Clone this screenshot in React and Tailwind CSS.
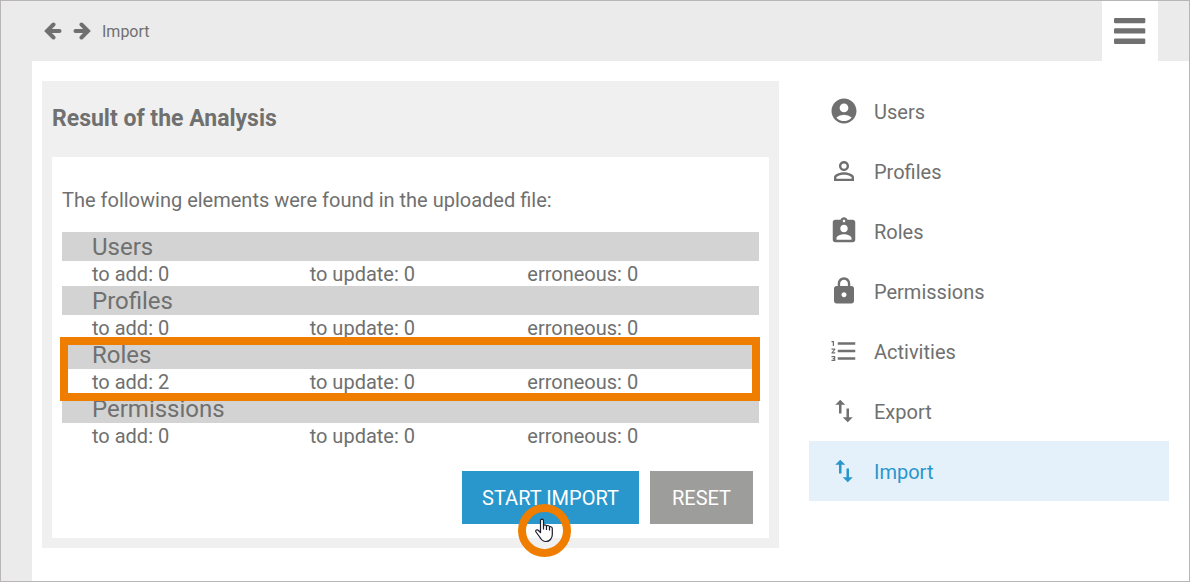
import {
  MdAccountCircle,
  MdPersonOutline,
  MdAssignmentInd,
  MdLock,
  MdFormatListNumbered,
  MdImportExport,
} from "react-icons/md";

const navItems = [
  { label: "Users", icon: MdAccountCircle },
  { label: "Profiles", icon: MdPersonOutline },
  { label: "Roles", icon: MdAssignmentInd },
  { label: "Permissions", icon: MdLock },
  { label: "Activities", icon: MdFormatListNumbered },
  { label: "Export", icon: MdImportExport },
  { label: "Import", icon: MdImportExport, active: true },
];

const results = [
  { name: "Users", add: 0, update: 0, erroneous: 0 },
  { name: "Profiles", add: 0, update: 0, erroneous: 0 },
  { name: "Roles", add: 2, update: 0, erroneous: 0, highlight: true },
  { name: "Permissions", add: 0, update: 0, erroneous: 0 },
];

function ArrowIcon({ className = "" }) {
  return (
    <svg viewBox="0 0 18 18" className={`w-[18px] h-[18px] ${className}`} fill="none" stroke="currentColor" strokeWidth="4" strokeLinecap="round">
      <path d="M9.500 2.500 3 9l6.500 6.500" />
      <path d="M4 9h11.500" />
    </svg>
  );
}

function Header() {
  return (
    <header className="flex items-stretch h-[60px] bg-[#ebebeb]">
      <nav className="flex flex-1 items-center pl-[43px]">
        <button aria-label="Back"><ArrowIcon /></button>
        <button aria-label="Forward" className="ml-[11px]"><ArrowIcon className="rotate-180" /></button>
        <span className="ml-[11px] pt-0.5 text-base">Import</span>
      </nav>
      <button aria-label="Menu" className="flex items-center justify-center w-14 mr-[31px] bg-white">
        <svg viewBox="0 0 32 26" className="w-8 h-[26px]" fill="currentColor">
          <rect x="0" y="0" width="31.300" height="5.300" rx="1.200" />
          <rect x="0" y="10.300" width="31.300" height="5.300" rx="1.200" />
          <rect x="0" y="20.600" width="31.300" height="5.300" rx="1.200" />
        </svg>
      </button>
    </header>
  );
}

function ResultGroup({ item }) {
  return (
    <section className="relative">
      <h2 className="h-[29px] pl-[30px] bg-[#d3d3d3] text-2xl leading-[31px]">{item.name}</h2>
      <div className="grid grid-cols-3 h-[25px] pl-[30px] pr-[14px] text-xl leading-[27px]">
        <span>to add: {item.add}</span>
        <span>to update: {item.update}</span>
        <span>erroneous: {item.erroneous}</span>
      </div>
      {item.highlight && (
        <div className="absolute z-10 -top-[3px] -bottom-[7px] -left-[2px] -right-px border-8 border-[#ef7d00]" />
      )}
    </section>
  );
}

function ClickMarker() {
  return (
    <span className="absolute left-14 top-[33px] flex items-center justify-center w-[53px] h-[53px] rounded-full border-8 border-[#ef7d00] pointer-events-none">
      <svg viewBox="0 0 20 26" className="w-5 h-[26px]" fill="#fff" stroke="#1b1b2b" strokeWidth="1.200" strokeLinejoin="round">
        <path d="M5.500 14.500V2.700C5.500.7 8.500.7 8.500 2.700V8c0-1.500 3-1.500 3 .5 0-1.500 3-1.300 3 .5v.5c0-1.300 2.800-1 2.800 1v6c0 4-2.800 7-6.300 7-3.500 0-5-2-6.300-4.500L1 14c-1-1.800 1.200-3 2.500-1.500z" />
        <path d="M8.500 8v3.500M11.500 8.500V12M14.500 9.500v3" fill="none" />
      </svg>
    </span>
  );
}

function Sidebar() {
  return (
    <nav className="w-[360px] shrink-0">
      {navItems.map(({ label, icon: Icon, active }) => (
        <a
          key={label}
          href="#"
          className={`flex items-center gap-[15px] h-[60px] pl-5 text-xl ${active ? "bg-[#e4f1fa] text-[#2996cc]" : ""}`}
        >
          <Icon className="w-[30px] h-[30px]" />
          <span className="pt-0.5">{label}</span>
        </a>
      ))}
    </nav>
  );
}

export default function App() {
  return (
    <div className="flex flex-col min-h-screen border border-[#b9b5b6] bg-white text-[#6f706f] font-[Roboto,sans-serif]">
      <Header />
      <div className="flex flex-1">
        <div className="w-[31px] shrink-0 bg-[#ebebeb]" />
        <div className="flex flex-1 items-start gap-[30px] pt-5 pb-8 pl-[10px] pr-5">
          <main className="flex-1 px-[10px] pb-[10px] bg-[#f0f0f0]">
            <h1 className="h-[76px] text-[23px] leading-[76px] font-bold">Result of the Analysis</h1>
            <div className="px-[10px] pt-[30px] pb-[14px] bg-white">
              <p className="pb-[19px] text-xl leading-[26px]">The following elements were found in the uploaded file:</p>
              {results.map((item) => (
                <ResultGroup key={item.name} item={item} />
              ))}
              <div className="flex justify-end gap-[11px] mt-[23px] mr-[6px] text-xl text-white">
                <button className="relative w-[177px] h-[53px] bg-[#2996cc]">
                  START IMPORT
                  <ClickMarker />
                </button>
                <button className="w-[103px] h-[53px] bg-[#9d9d9b]">RESET</button>
              </div>
            </div>
          </main>
          <Sidebar />
        </div>
      </div>
    </div>
  );
}
